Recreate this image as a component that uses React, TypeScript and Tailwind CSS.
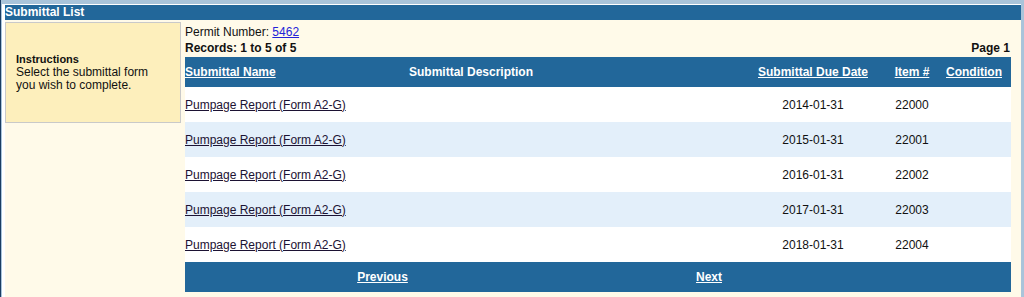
import React from 'react';

const rows = [
  { name: 'Pumpage Report (Form A2-G)', due: '2014-01-31', item: '22000' },
  { name: 'Pumpage Report (Form A2-G)', due: '2015-01-31', item: '22001' },
  { name: 'Pumpage Report (Form A2-G)', due: '2016-01-31', item: '22002' },
  { name: 'Pumpage Report (Form A2-G)', due: '2017-01-31', item: '22003' },
  { name: 'Pumpage Report (Form A2-G)', due: '2018-01-31', item: '22004' },
];

const cols = 'grid grid-cols-[175px_395px_116px_66px_74px] items-center';

const App: React.FC = () => {
  return (
    <div className="w-[1024px] h-[297px] overflow-hidden bg-[#a9c4da] border-l border-[#1b3d63] pt-1 font-['Liberation_Sans',Arial,sans-serif] text-[12px] text-[#111]">
      <div className="ml-px mr-[3px] h-full bg-white pt-px pl-[3px] flex flex-col">
        <div className="h-[15px] bg-[#22679a] text-white font-bold leading-[15px]">Submittal List</div>
        <div className="flex-1 bg-[#fffae9] flex pt-[2px]">
          <div className="w-[176px] h-[101px] bg-[#fdefbc] border border-[#c9c9c9] flex flex-col justify-center pl-[10px] pb-[1px] leading-[13px]">
            <div className="font-bold text-[11px]">Instructions</div>
            <div>Select the submittal form</div>
            <div>you wish to complete.</div>
          </div>
          <div className="ml-[4px] w-[826px] flex flex-col">
            <div className="h-[18px] leading-[18px] pt-[1px]">
              Permit Number: <a className="text-[#2323d8] underline">5462</a>
            </div>
            <div className="flex justify-between font-bold h-[17px] leading-[17px] pr-[1px]">
              <span>Records: 1 to 5 of 5</span>
              <span>Page 1</span>
            </div>
            <div className={`${cols} h-[30px] bg-[#22679a] text-white font-bold`}>
              <a className="underline">Submittal Name</a>
              <span className="pl-[49px]">Submittal Description</span>
              <a className="underline text-center">Submittal Due Date</a>
              <a className="underline text-center pl-4">Item #</a>
              <a className="underline text-center">Condition</a>
            </div>
            {rows.map((r, i) => (
              <div key={r.item} className={`${cols} h-[35px] ${i % 2 === 1 ? 'bg-[#e3effa]' : 'bg-white'}`}>
                <a className="underline text-[#1c1233]">{r.name}</a>
                <span />
                <span className="text-center">{r.due}</span>
                <span className="text-center pl-4">{r.item}</span>
                <span />
              </div>
            ))}
            <div className="grid grid-cols-[395px_258px_1fr] items-center h-[30px] bg-[#22679a] text-white font-bold">
              <a className="underline text-center">Previous</a>
              <a className="underline text-center">Next</a>
              <span />
            </div>
          </div>
        </div>
      </div>
    </div>
  );
};

export default App;
